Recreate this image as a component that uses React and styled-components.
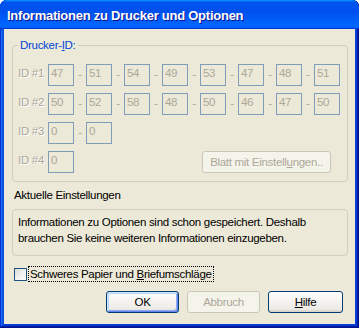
import React from "react";
import styled, { createGlobalStyle } from "styled-components";

const FONT = '"Liberation Sans", Arial, sans-serif';

const Global = createGlobalStyle`
  html, body { margin: 0; padding: 0; background: #ffffff; }
  body { font-family: ${FONT}; font-size: 11.5px; letter-spacing: -0.3px; }
`;

const Window = styled.div`
  width: 359px;
  height: 328px;
  box-sizing: border-box;
  display: flex;
  flex-direction: column;
  background: #0831d9;
  border-radius: 7px 7px 0 0;
  padding: 0 4px 4px;
  box-shadow: inset -1px -1px #00138c, inset 1px 1px #0831d9,
    inset -2px -2px #001ea0, inset 2px 2px #166aee,
    inset -3px -3px #003bda, inset 3px 3px #0855dd,
    inset -4px -4px #0a3fd0, inset 4px 4px #0a4be0;
  overflow: hidden;
`;

const TitleBar = styled.div`
  height: 29px;
  margin: 0 -4px;
  padding: 1px 0 0 7px;
  box-sizing: border-box;
  display: flex;
  align-items: center;
  border-radius: 7px 7px 0 0;
  background: linear-gradient(
    to bottom,
    #0997ff 0%,
    #0053ee 8%,
    #0050ee 40%,
    #0066ff 88%,
    #0066ff 93%,
    #005bff 95%,
    #003dd7 96%,
    #003dd7 100%
  );
  color: #ffffff;
  font-weight: bold;
  font-size: 13px;
  letter-spacing: -0.25px;
  text-shadow: 1px 1px #0f1089;
`;

const Client = styled.div`
  flex: 1;
  background: #ece9d8;
  padding: 9px 7px 0 8px;
  display: flex;
  flex-direction: column;
  color: #000;
`;

const Group = styled.fieldset`
  margin: 0;
  padding: 12px 5px 8px 5px;
  border: 1px solid #d0d0bf;
  border-radius: 4px;
  min-width: 0;
`;

const Legend = styled.legend`
  padding: 0 2px;
  line-height: 14px;
  color: #0046d5;
`;

const Rows = styled.div`
  display: flex;
  flex-direction: column;
  gap: 7px;
`;

const Row = styled.div`
  display: flex;
  align-items: flex-start;
  height: 22px;
`;

const IdLabel = styled.span`
  width: 30px;
  line-height: 15px;
  padding-top: 2px;
  color: #aca899;
  text-shadow: 1px 1px #ffffff;
  white-space: nowrap;
`;

const IdBox = styled.div`
  width: 26px;
  height: 22px;
  box-sizing: border-box;
  border: 1px solid #7f9db9;
  background: #ece9d8;
  color: #aca899;
  padding: 1px 2px 0;
  line-height: 15px;
`;

const Dash = styled.span`
  width: 12px;
  height: 22px;
  display: flex;
  align-items: center;
  justify-content: center;
  line-height: 1;
  color: #aca899;
`;

const Button = styled.button`
  font-family: ${FONT};
  font-size: 11.5px;
  letter-spacing: -0.3px;
  white-space: nowrap;
  height: 22px;
  width: ${(p) => p.$w || 73}px;
  box-sizing: border-box;
  border-radius: 3px;
  padding: 0;
  border: 1px solid ${(p) => (p.disabled ? "#c9c7ba" : "#003c74")};
  color: ${(p) => (p.disabled ? "#aca899" : "#000")};
  background: ${(p) =>
    p.disabled
      ? "#f5f4ea"
      : "linear-gradient(to bottom, #ffffff 0%, #f5f4f0 40%, #ecebe6 85%, #d6d0c5 100%)"};
  box-shadow: ${(p) =>
    p.$default
      ? "inset 1px 1px 0 #cee7ff, inset -1px -1px 0 #6982ee, inset 2px 2px 0 #bcd4f6, inset -2px -2px 0 #89adf0"
      : "none"};
  margin-left: ${(p) => (p.$push ? "auto" : "0")};
  margin-right: ${(p) => p.$mr || 0}px;
  u { text-decoration: underline; }
`;

const Caption = styled.div`
  margin-top: 6px;
  line-height: 15px;
  padding-left: 2px;
`;

const InfoBox = styled.div`
  margin-top: 6px;
  border: 1px solid #d0d0bf;
  border-radius: 4px;
  padding: 4px 5px 9px 5px;
  line-height: 16px;
`;

const CheckRow = styled.label`
  margin-top: 11px;
  display: flex;
  align-items: center;
  gap: 2px;
  padding-left: 2px;
`;

const CheckBox = styled.span`
  width: 13px;
  height: 13px;
  box-sizing: border-box;
  border: 1px solid #1c5180;
  background: linear-gradient(135deg, #dcdcd7 0%, #f4f4f0 60%, #ffffff 100%);
`;

const CheckText = styled.span`
  outline: 1px dotted #000;
  padding: 0 1px;
  line-height: 14px;
`;

const ButtonRow = styled.div`
  margin-top: 10px;
  display: flex;
  justify-content: flex-end;
  gap: 8px;
  padding-right: 5px;
`;

const rows = [
  ["ID #1", ["47", "51", "54", "49", "53", "47", "48", "51"]],
  ["ID #2", ["50", "52", "58", "48", "50", "46", "47", "50"]],
  ["ID #3", ["0", "0"]],
  ["ID #4", ["0"]],
];

export default function App() {
  return (
    <>
      <Global />
      <Window>
        <TitleBar>Informationen zu Drucker und Optionen</TitleBar>
        <Client>
          <Group>
            <Legend>
              Drucker-<u>I</u>D:
            </Legend>
            <Rows>
              {rows.map(([label, vals], i) => (
                <Row key={label}>
                  <IdLabel>{label}</IdLabel>
                  {vals.map((v, j) => (
                    <React.Fragment key={j}>
                      {j > 0 && <Dash>-</Dash>}
                      <IdBox>{v}</IdBox>
                    </React.Fragment>
                  ))}
                  {i === 3 && (
                    <Button disabled $push $w={129} $mr={11}>
                      Blatt mit Einstell<u>u</u>ngen..
                    </Button>
                  )}
                </Row>
              ))}
            </Rows>
          </Group>
          <Caption>Aktuelle Einstellungen</Caption>
          <InfoBox>
            Informationen zu Optionen sind schon gespeichert. Deshalb
            <br />
            brauchen Sie keine weiteren Informationen einzugeben.
          </InfoBox>
          <CheckRow>
            <CheckBox />
            <CheckText>
              Schweres Papier und <u>B</u>riefumschläge
            </CheckText>
          </CheckRow>
          <ButtonRow>
            <Button $default>OK</Button>
            <Button disabled>Abbruch</Button>
            <Button $w={75}>
              <u>H</u>ilfe
            </Button>
          </ButtonRow>
        </Client>
      </Window>
    </>
  );
}
